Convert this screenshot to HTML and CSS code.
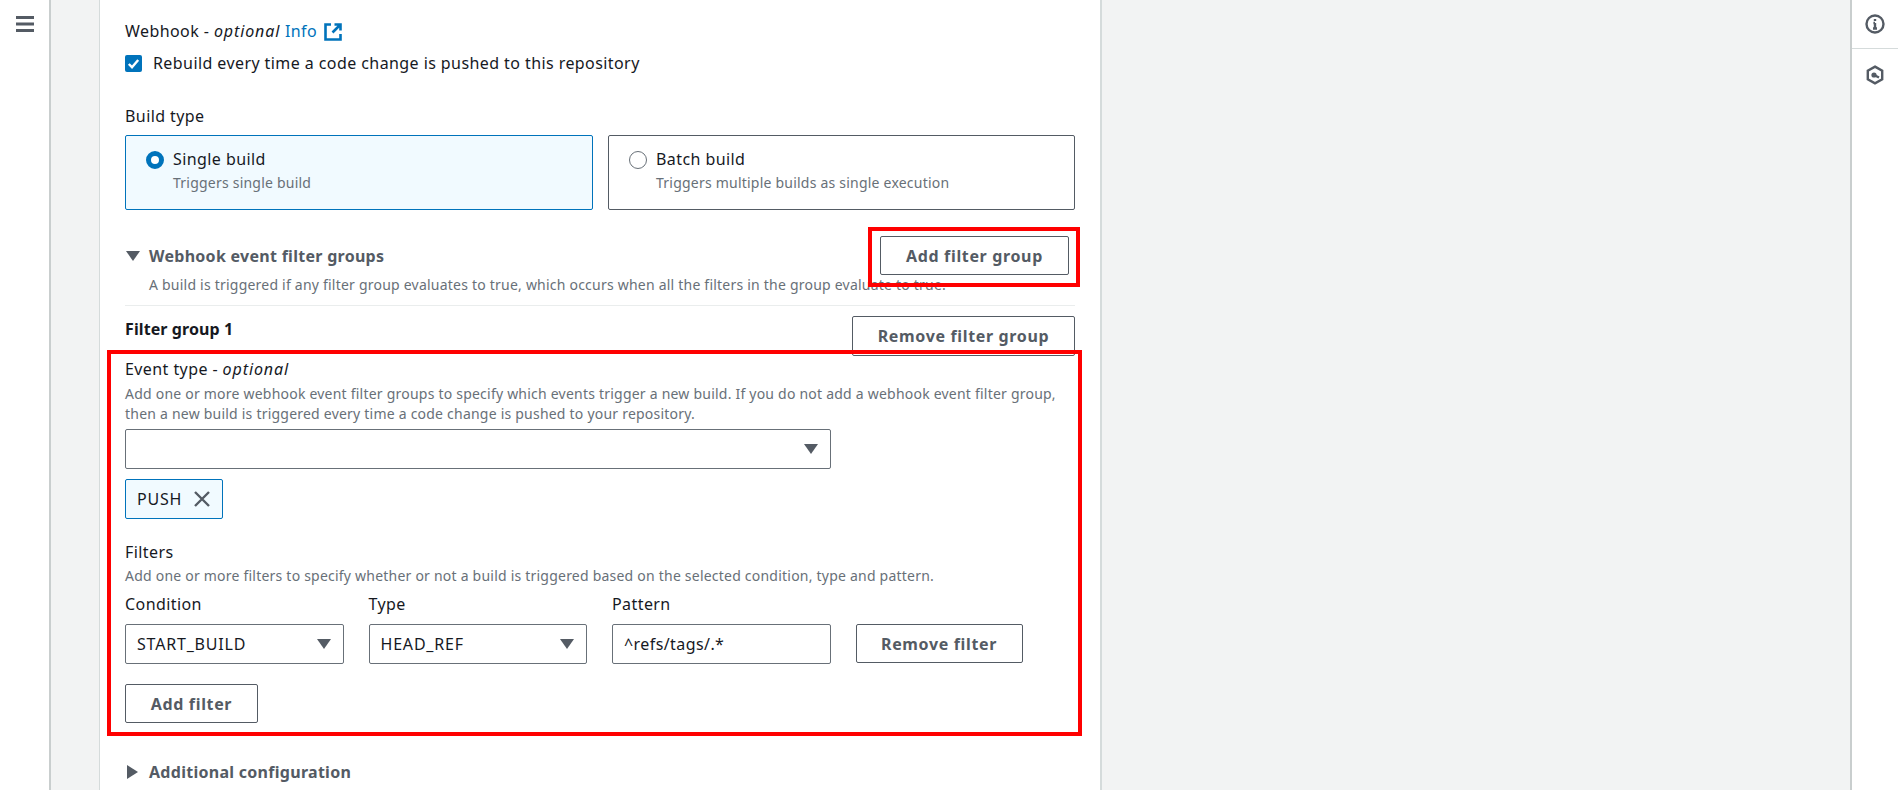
FILE: index.html
```html
<!DOCTYPE html>
<html>
<head>
    <meta name="viewport" content="width=device-width, initial-scale=1">
    <title>Edit source - CodeBuild</title>
    <link rel="stylesheet" href="styles.css">
</head>
<body>
<div class="page">
  <!-- left nav, collapsed -->
  <div class="nav">
    <svg class="burger" width="18" height="16" viewBox="0 0 18 16"><path d="M0 1.5h18M0 8h18M0 14.5h18"/></svg>
  </div>

  <div class="content">
    <div class="card">
      <div class="label">Webhook - <i>optional</i> <a class="info" href="#">Info</a>
        <svg class="ext" width="18" height="18" viewBox="0 0 18 18"><path d="M7 1.5H1.5v15h15V11"/><path d="M10.5 1.5h6v6M16 2 8.5 9.5"/></svg>
      </div>
      <div class="check-row">
        <span class="checkbox"><svg width="17" height="17" viewBox="0 0 17 17"><path d="M3.8 9l3.2 3.2L13.2 5"/></svg></span>
        <span>Rebuild every time a code change is pushed to this repository</span>
      </div>

      <div class="label build-label">Build type</div>
      <div class="tiles">
        <div class="tile selected">
          <span class="radio on"></span>
          <div>
            <div class="tile-name">Single build</div>
            <div class="small">Triggers single build</div>
          </div>
        </div>
        <div class="tile">
          <span class="radio"></span>
          <div>
            <div class="tile-name">Batch build</div>
            <div class="small">Triggers multiple builds as single execution</div>
          </div>
        </div>
      </div>

      <div class="expand-head">
        <div class="expand-title"><span class="arrow-down"></span>Webhook event filter groups</div>
        <button class="btn add-group">Add filter group</button>
      </div>
      <div class="small expand-desc">A build is triggered if any filter group evaluates to true, which occurs when all the filters in the group evaluate to true.</div>
      <div class="divider"></div>

      <div class="group-head">
        <div class="group-title">Filter group 1</div>
        <button class="btn remove-group">Remove filter group</button>
      </div>

      <div class="label event-label">Event type - <i>optional</i></div>
      <div class="small desc-block">Add one or more webhook event filter groups to specify which events trigger a new build. If you do not add a webhook event filter group,<br>then a new build is triggered every time a code change is pushed to your repository.</div>
      <div class="select wide"><span></span><span class="caret"></span></div>
      <div class="token"><span class="value">PUSH</span>
        <svg width="16" height="16" viewBox="0 0 16 16"><path d="M1 1l14 14M15 1 1 15"/></svg>
      </div>

      <div class="label filters-label">Filters</div>
      <div class="small filters-desc">Add one or more filters to specify whether or not a build is triggered based on the selected condition, type and pattern.</div>
      <div class="filter-row">
        <div class="filter-col">
          <div class="label">Condition</div>
          <div class="select"><span class="value">START_BUILD</span><span class="caret"></span></div>
        </div>
        <div class="filter-col">
          <div class="label">Type</div>
          <div class="select"><span class="value">HEAD_REF</span><span class="caret"></span></div>
        </div>
        <div class="filter-col">
          <div class="label">Pattern</div>
          <div class="select"><span>^refs/tags/.*</span></div>
        </div>
        <button class="btn remove-filter">Remove filter</button>
      </div>
      <button class="btn add-filter">Add filter</button>

      <div class="expand-title additional"><span class="arrow-right"></span>Additional configuration</div>

      <!-- red annotation boxes on top of the form -->
      <div class="mark mark-button"></div>
      <div class="mark mark-group"></div>
    </div>
  </div>

  <div class="rail">
    <div class="rail-item">
      <svg width="20" height="20" viewBox="0 0 20 20"><circle cx="10" cy="10" r="8.5"/><path d="M10 9v5.5M8 14.5h4M8.4 9H10"/><path d="M10 5v2"/></svg>
    </div>
    <div class="rail-item second">
      <svg width="20" height="20" viewBox="0 0 20 20"><path d="M10 1.6 17.2 5.8v8.4L10 18.4 2.8 14.2V5.8z"/><circle class="dot" cx="9" cy="10" r="2.6"/><path d="M10 10.5l4 2"/></svg>
    </div>
  </div>
</div>
</body>
</html>
```
FILE: styles.css
```css
html, body {
    margin: 0;
    padding: 0;
    height: 100%;
    overflow: hidden;
}

body {
    font-family: "Noto Sans", sans-serif;
    font-size: 16px;
    line-height: 22px;
    letter-spacing: 0.42px;
    color: #16191f;
    background-color: #f2f3f3;
}

i {
    letter-spacing: 0.9px;
}

.page {
    display: flex;
    height: 790px;
    overflow: hidden;
}

.nav {
    width: 49px;
    flex: none;
    background-color: #ffffff;
    border-right: 2px solid #c9cece;
}

.burger {
    display: block;
    margin: 16px 0 0 16px;
    fill: none;
    stroke: #545b64;
    stroke-width: 3;
}

.content {
    flex: 1;
    padding-left: 48px;
}

.card {
    position: relative;
    box-sizing: border-box;
    width: 1003px;
    height: 820px;
    padding: 20px 25px 0 25px;
    background-color: #ffffff;
    border-left: 1px solid #d5dbdb;
    border-right: 2px solid #d5dbdb;
}

.rail {
    width: 46px;
    flex: none;
    background-color: #ffffff;
    border-left: 2px solid #c9cece;
}

.rail-item {
    height: 48px;
    display: flex;
    justify-content: center;
    align-items: center;
    border-bottom: 1px solid #d5dbdb;
}

.rail-item.second {
    height: 52px;
    border-bottom: 0;
}

.rail-item svg {
    fill: none;
    stroke: #545b64;
    stroke-width: 2.4;
}

.rail-item .dot {
    fill: #545b64;
    stroke: none;
}

.label {
    height: 22px;
}

.info {
    color: #0073bb;
    text-decoration: none;
}

.ext {
    vertical-align: -4px;
    margin-left: 2px;
    fill: none;
    stroke: #0073bb;
    stroke-width: 2.6;
}

.small {
    font-size: 14px;
    line-height: 20px;
    letter-spacing: 0.22px;
    color: #687078;
}

.check-row {
    display: flex;
    align-items: center;
    gap: 11px;
    margin-top: 10px;
}

.checkbox {
    width: 17px;
    height: 17px;
    border-radius: 2px;
    background-color: #0073bb;
}

.checkbox svg {
    display: block;
    fill: none;
    stroke: #ffffff;
    stroke-width: 2.4;
}

.build-label {
    margin-top: 31px;
}

.tiles {
    display: flex;
    gap: 15px;
    margin-top: 8px;
}

.tile {
    box-sizing: border-box;
    flex: 1;
    height: 75px;
    display: flex;
    gap: 9px;
    padding: 12px 20px;
    border: 1px solid #545b64;
    border-radius: 2px;
}

.tile.selected {
    flex: none;
    width: 468px;
    background-color: #f1faff;
    border-color: #0073bb;
}

.radio {
    box-sizing: border-box;
    width: 18px;
    height: 18px;
    flex: none;
    margin-top: 3px;
    border: 1px solid #687078;
    border-radius: 50%;
    background-color: #ffffff;
}

.radio.on {
    border: 5px solid #0073bb;
}

.tile-name {
    height: 25px;
}

.expand-head {
    display: flex;
    justify-content: space-between;
    align-items: center;
    margin-top: 26px;
    padding-right: 6px;
}

.expand-title {
    display: flex;
    align-items: center;
    font-weight: 700;
    letter-spacing: 0.28px;
    color: #545b64;
}

.arrow-down {
    width: 0;
    height: 0;
    margin: 0 9px 0 1px;
    border-left: 7px solid transparent;
    border-right: 7px solid transparent;
    border-top: 10px solid #545b64;
}

.arrow-right {
    width: 0;
    height: 0;
    margin: 0 11px 0 2px;
    border-top: 7px solid transparent;
    border-bottom: 7px solid transparent;
    border-left: 11px solid #545b64;
}

.expand-desc {
    margin-left: 24px;
}

.divider {
    height: 1px;
    margin-top: 10px;
    background-color: #eaeded;
}

.btn {
    box-sizing: border-box;
    height: 39px;
    padding: 0;
    font-family: inherit;
    font-size: 16px;
    font-weight: 700;
    letter-spacing: 0.65px;
    color: #545b64;
    background-color: #ffffff;
    border: 1px solid #545b64;
    border-radius: 2px;
}

.add-group {
    width: 189px;
}

.group-head {
    display: flex;
    justify-content: space-between;
    margin-top: 10px;
}

.group-title {
    margin-top: 2px;
    font-weight: 700;
    letter-spacing: 0.1px;
}

.remove-group {
    width: 223px;
    height: 40px;
}

.event-label {
    margin-top: 2px;
}

.desc-block {
    margin-top: 4px;
}

.select {
    box-sizing: border-box;
    height: 40px;
    display: flex;
    justify-content: space-between;
    align-items: center;
    padding: 0 12px 0 11px;
    background-color: #ffffff;
    border: 1px solid #687078;
    border-radius: 2px;
}

.select.wide {
    width: 706px;
    margin-top: 5px;
}

.value {
    letter-spacing: 0.8px;
}

.caret {
    width: 0;
    height: 0;
    border-left: 7px solid transparent;
    border-right: 7px solid transparent;
    border-top: 10px solid #545b64;
}

.token {
    box-sizing: border-box;
    width: 98px;
    height: 40px;
    display: flex;
    align-items: center;
    justify-content: space-between;
    margin-top: 10px;
    padding: 0 12px 0 11px;
    background-color: #f1faff;
    border: 1px solid #0073bb;
    border-radius: 2px;
}

.token svg {
    fill: none;
    stroke: #545b64;
    stroke-width: 2.4;
}

.filters-label {
    margin-top: 22px;
}

.filters-desc {
    margin-top: 3px;
}

.filter-row {
    display: flex;
    align-items: flex-end;
    gap: 25px;
    margin-top: 7px;
}

.filter-col {
    width: 218.5px;
}

.filter-col .label {
    margin-bottom: 9px;
}

.remove-filter {
    width: 167px;
    margin-bottom: 1px;
}

.add-filter {
    display: block;
    width: 133px;
    margin-top: 20px;
}

.additional {
    margin-top: 38px;
}

.mark {
    position: absolute;
    box-sizing: border-box;
    border: 4px solid #ff0000;
}

.mark-button {
    left: 768px;
    top: 227px;
    width: 212px;
    height: 60px;
}

.mark-group {
    left: 7px;
    top: 350px;
    width: 975px;
    height: 386px;
}
```
